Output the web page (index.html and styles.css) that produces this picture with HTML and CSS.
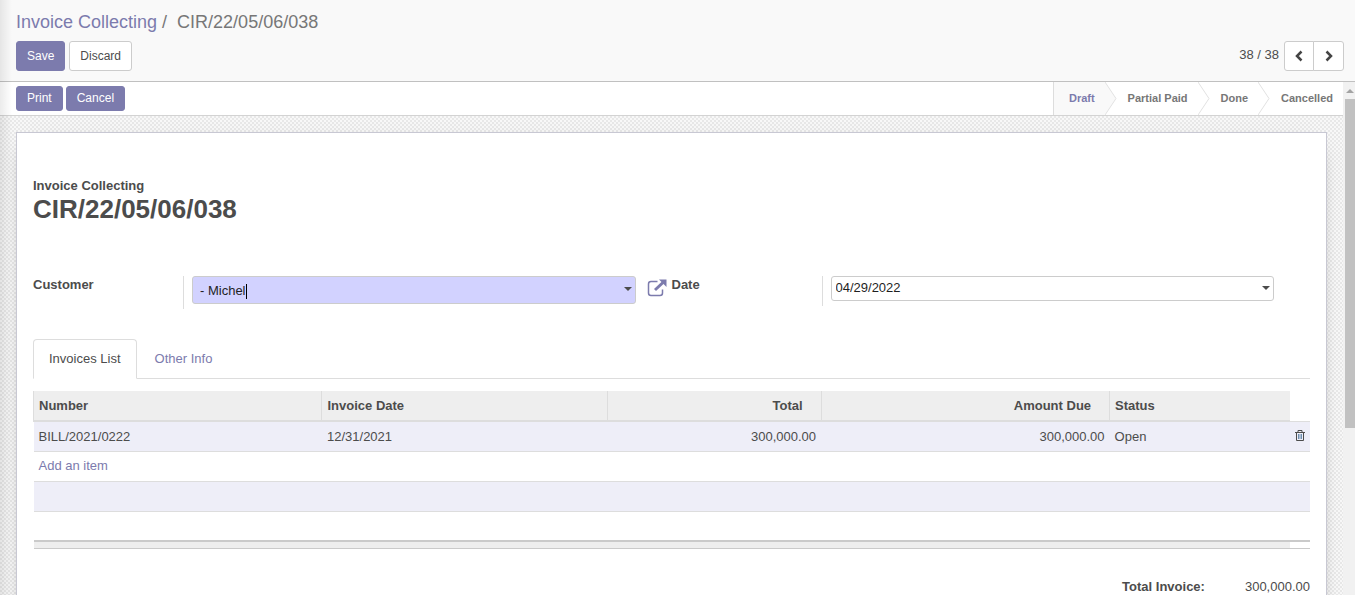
FILE: index.html
```html
<!DOCTYPE html>
<html lang="en">
<head>
<meta charset="utf-8">
<title>CIR/22/05/06/038 - Invoice Collecting</title>
<link rel="stylesheet" href="styles.css">
</head>
<body>
<div class="app">
  <header class="control-panel">
    <nav class="breadcrumb"><a href="#">Invoice Collecting</a><span class="sep">/</span><span>CIR/22/05/06/038</span></nav>
    <div class="toolbar">
      <div class="actions">
        <button class="btn primary" type="button">Save</button>
        <button class="btn" type="button">Discard</button>
      </div>
      <div class="pager">
        <span class="pager-count">38 / 38</span>
        <div class="pager-buttons">
          <button type="button" aria-label="Previous"><svg width="8" height="12" viewBox="0 0 8 12"><path d="M6.500 1.500L2 6l4.500 4.500"/></svg></button>
          <button type="button" aria-label="Next"><svg width="8" height="12" viewBox="0 0 8 12"><path d="M1.500 1.500L6 6l-4.500 4.500"/></svg></button>
        </div>
      </div>
    </div>
  </header>
  <div class="content">
    <main class="form-view">
      <div class="statusbar">
        <div class="status-actions">
          <button class="btn primary small" type="button">Print</button>
          <button class="btn primary small" type="button">Cancel</button>
        </div>
        <ol class="steps">
          <li class="active">Draft<svg class="arrow" viewBox="0 0 12 33" aria-hidden="true"><path d="M0 0L11 16.500L0 33"/></svg></li>
          <li>Partial Paid<svg class="arrow" viewBox="0 0 12 33" aria-hidden="true"><path d="M0 0L11 16.500L0 33"/></svg></li>
          <li>Done<svg class="arrow" viewBox="0 0 12 33" aria-hidden="true"><path d="M0 0L11 16.500L0 33"/></svg></li>
          <li>Cancelled</li>
        </ol>
      </div>
      <div class="sheet-area">
        <section class="sheet">
          <div class="title-label">Invoice Collecting</div>
          <h1>CIR/22/05/06/038</h1>
          <div class="fields">
            <div class="field">
              <label for="customer">Customer</label>
              <div class="value tall">
                <div class="combo active"><div class="typed"><input id="customer" type="text" value="- Michel"><span class="caret"></span></div><span class="drop"></span></div>
                <button class="open" type="button" aria-label="Open customer"><svg width="20" height="18" viewBox="0 0 20 18"><path class="box" d="M10.500 2.500H4Q1.500 2.500 1.500 5v9Q1.500 16.500 4 16.500h9Q15.500 16.500 15.500 14v-3.500"/><path class="shaft" d="M8 11L16 3.500"/><path class="head" d="M12 .5h7.500V8z"/></svg></button>
              </div>
            </div>
            <div class="field">
              <label for="date">Date</label>
              <div class="value">
                <div class="combo date"><input id="date" type="text" value="04/29/2022"><span class="drop"></span></div>
              </div>
            </div>
          </div>
          <nav class="tabs"><a class="current" href="#">Invoices List</a><a href="#">Other Info</a></nav>
          <table class="list">
            <colgroup><col class="c-number"><col class="c-date"><col class="c-total"><col class="c-due"><col class="c-status"><col class="c-delete"></colgroup>
            <thead><tr><th>Number</th><th>Invoice Date</th><th class="num">Total</th><th class="num">Amount Due</th><th>Status</th><td></td></tr></thead>
            <tbody>
              <tr class="odd"><td>BILL/2021/0222</td><td>12/31/2021</td><td class="num">300,000.00</td><td class="num">300,000.00</td><td>Open</td><td class="delete"><button type="button" aria-label="Delete"><svg width="10" height="11" viewBox="0 0 10 11"><path d="M0 2.500h10M3 2.500V.5h4v2M1.500 2.500v8h7v-8"/><path class="ribs" d="M3.500 4v5M5 4v5M6.500 4v5"/></svg></button></td></tr>
              <tr><td colspan="6"><a href="#">Add an item</a></td></tr>
              <tr class="odd"><td colspan="6"></td></tr>
              <tr><td colspan="6"></td></tr>
            </tbody>
            <tfoot><tr><td colspan="5"></td><td class="blank"></td></tr></tfoot>
          </table>
          <div class="totals"><strong>Total Invoice:</strong><span>300,000.00</span></div>
        </section>
      </div>
    </main>
    <div class="scrollbar" aria-hidden="true"><span class="up"></span><span class="thumb"></span></div>
  </div>
  <div class="edge-shadow"></div>
</div>
</body>
</html>
```
FILE: styles.css
```css
* { box-sizing: border-box; }
body { margin: 0; font: 13px/20px "Liberation Sans", Arial, sans-serif; color: #4c4c4c; background: #fff; }
a { color: #7c7bad; text-decoration: none; }
button, input { font: inherit; color: inherit; }
button { cursor: pointer; }
.app { position: relative; display: flex; flex-direction: column; height: 100vh; overflow: hidden; }

.control-panel { padding: 10px 11px 10px 16px; background: #f9f9f9; border-bottom: 1px solid #c0c0c0; }
.breadcrumb { font-size: 18px; line-height: 24px; color: #777; }
.breadcrumb .sep { padding: 0 10px 0 5px; }
.toolbar { display: flex; justify-content: space-between; align-items: center; padding-top: 7px; }
.actions { display: flex; gap: 4px; }
.btn { height: 30px; padding: 0 10px; font-size: 12px; line-height: 18px; background: #fff; border: 1px solid #ccc; border-radius: 3px; }
.btn.primary { color: #fff; background: #7c7bad; border-color: #7c7bad; }
.btn.small { height: 25px; padding-bottom: 2px; }
.pager { display: flex; align-items: center; gap: 5px; }
.pager-count { padding-bottom: 2px; }
.pager-buttons { display: flex; }
.pager-buttons button { display: flex; align-items: center; justify-content: center; width: 30px; height: 30px; padding: 0; background: #fff; border: 1px solid #ccc; border-radius: 3px 0 0 3px; }
.pager-buttons button + button { width: 31px; margin-left: -1px; border-radius: 0 3px 3px 0; }
.pager-buttons path { fill: none; stroke: #444; stroke-width: 2.5; }

.content { display: flex; flex: 1; min-height: 0; }
.form-view { flex: 1; min-width: 0; overflow: hidden; }
.statusbar { display: flex; justify-content: space-between; height: 34px; background: #fff; border-bottom: 1px solid #d3d3d3; }
.status-actions { display: flex; gap: 3px; padding: 4px 0 0 16px; }
.steps { display: flex; margin: 0; padding: 0; list-style: none; font-size: 11px; font-weight: bold; line-height: 33px; color: #777; border-left: 1px solid #ddd; }
.steps li { position: relative; padding: 0 10px 0 23px; }
.steps .active { padding-left: 15px; color: #7c7bad; background: #f9f9f9; }
.arrow { position: absolute; top: 0; left: 100%; z-index: 1; width: 12px; height: 33px; fill: #fff; stroke: #e2e2e2; }
.active .arrow { fill: #f9f9f9; }

.sheet-area { padding: 16px 16px 0; background: conic-gradient(#e8e8e8 25%, #f8f8f8 0 50%, #e8e8e8 0 75%, #f8f8f8 0) 0 0 / 4px 4px; }
.sheet { min-height: 700px; padding: 43px 16px 0; background: #fff; border: 1px solid #c8c8d3; box-shadow: 0 5px 20px -15px #000; }
.title-label { font-weight: bold; }
h1 { margin: 0; font-size: 26px; line-height: 26px; }
.fields { display: grid; grid-template-columns: 1fr 1fr; margin-top: 54px; height: 33px; }
.field { display: flex; align-items: flex-start; }
.field label { width: 150px; font-weight: bold; line-height: 18px; }
.value { display: flex; flex: 1; height: 30px; padding-left: 8px; border-left: 1px solid #ddd; }
.value.tall { height: 33px; }
.combo { display: flex; flex: 1; align-items: center; height: 28px; padding: 0 3px 0 7px; background: #fff; border: 1px solid #ccc; border-radius: 3px; }
.combo.active { background: #d2d2ff; }
.combo.date { height: 25px; margin-right: 36px; padding: 0 3px 2px 4px; }
.combo input { flex: 1; min-width: 0; padding: 0; color: #1f1f1f; background: transparent; border: 0; outline: 0; }
.typed { display: flex; flex: 1; align-items: center; padding-top: 2px; }
.typed input { flex: none; field-sizing: content; }
.caret { width: 1px; height: 15px; background: #000; }
.drop { border: 4px solid transparent; border-top-color: #4c4c4c; border-bottom: 0; }
.active .drop { margin-bottom: 3px; }
.open { display: flex; margin: 3px 5px 0 11px; padding: 0; background: none; border: 0; }
.open .box { fill: none; stroke: #7c7bad; stroke-width: 1.5; }
.open .shaft { fill: none; stroke: #7c7bad; stroke-width: 3; }
.open .head { fill: #7c7bad; }

.tabs { display: flex; margin-top: 30px; border-bottom: 1px solid #ddd; }
.tabs a { height: 39px; padding: 9px 17px 8px; border: 1px solid transparent; }
.tabs .current { height: 40px; margin-bottom: -1px; padding: 9px 15px; color: #4c4c4c; background: #fff; border-color: #ddd; border-bottom-color: #fff; border-radius: 4px 4px 0 0; }

.list { width: 100%; margin-top: 12px; border-collapse: collapse; table-layout: fixed; }
.c-number { width: 22.6%; }
.c-date { width: 22.4%; }
.c-total { width: 16.7%; }
.c-due { width: 22.6%; }
.c-delete { width: 20px; }
.list th { height: 30px; padding: 0 5px; text-align: left; background: #eee; border-left: 1px solid #ddd; border-bottom: 2px solid #ddd; }
.list thead td { border-bottom: 1px solid #ddd; }
.list tbody td { height: 30px; padding: 0 5px; border-bottom: 1px solid #ddd; }
.list .num { text-align: right; }
.list th.num { padding-right: 18px; }
.list tbody .odd td { padding-top: 2px; background: #eeeef8; }
.list tbody .delete { padding: 0; text-align: center; }
.delete button { padding: 0; background: none; border: 0; }
.delete svg { display: block; fill: none; stroke: #4c4c4c; }
.delete .ribs { stroke: #6f8fae; }
.list tfoot td { height: 7px; padding: 0; background: #eee; border-top: 2px solid #cacaca; border-bottom: 1px solid #cacaca; }
.list tfoot .blank { background: #fff; }
.totals { display: flex; justify-content: flex-end; gap: 40px; margin-top: 28px; }

.scrollbar { display: flex; flex-direction: column; align-items: stretch; width: 12px; padding: 7px 0 0 2px; background: #f1f1f1; }
.scrollbar .up { width: 0; margin: 0 auto; border: 4px solid transparent; border-top: 0; border-bottom-color: #a3a3a3; }
.scrollbar .thumb { height: 65%; margin-top: 6px; background: #c1c1c1; }
.edge-shadow { position: absolute; top: 0; bottom: 0; left: 0; width: 12px; background: linear-gradient(to right, rgba(0,0,0,.08), transparent); pointer-events: none; }
```
